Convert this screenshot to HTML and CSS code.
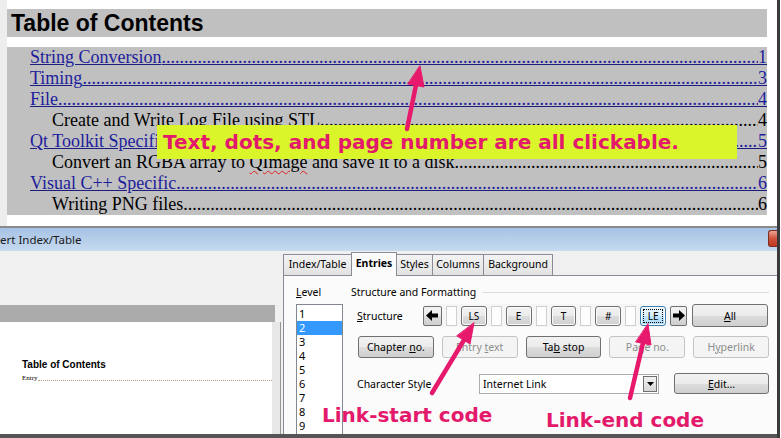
FILE: index.html
```html
<!DOCTYPE html>
<html lang="en">
<head>
    <meta charset="UTF-8">
    <title>Clickable Table of Contents</title>
    <link rel="stylesheet" href="styles.css">
</head>
<body>
    <div class="frame">
        <div class="shot">
            <!-- document with the generated index -->
            <div class="doc">
                <h1 class="toc-title">Table of Contents</h1>
                <div class="toc">
                    <a class="row lvl1 link" href="#">String Conversion<span class="dots"></span><span class="pg">1</span></a>
                    <a class="row lvl1 link" href="#">Timing<span class="dots"></span><span class="pg">3</span></a>
                    <a class="row lvl1 link" href="#">File<span class="dots"></span><span class="pg">4</span></a>
                    <div class="row lvl2">Create and Write Log File using STL<span class="dots"></span><span class="pg">4</span></div>
                    <a class="row lvl1 link" href="#">Qt Toolkit Specific<span class="dots"></span><span class="pg">5</span></a>
                    <div class="row lvl2">Convert an RGBA array to&nbsp;<span class="spell">QImage</span>&nbsp;and save it to a disk.<span class="dots"></span><span class="pg">5</span></div>
                    <a class="row lvl1 link" href="#">Visual C++ Specific<span class="dots"></span><span class="pg">6</span></a>
                    <div class="row lvl2">Writing PNG files<span class="dots"></span><span class="pg">6</span></div>
                </div>
            </div>

            <!-- Insert Index/Table dialog -->
            <div class="dialog">
                <div class="titlebar">
                    <span>ert Index/Table</span>
                    <span class="close"></span>
                </div>
                <div class="dlg-body">
                    <div class="preview">
                        <div class="pv-top"></div>
                        <div class="pv-band"></div>
                        <div class="pv-page">
                            <div class="pv-sheet">
                                <div class="pv-title">Table of Contents</div>
                                <div class="pv-entry"><span>Entry</span><span class="pv-lead"></span></div>
                            </div>
                            <div class="pv-scroll"></div>
                        </div>
                    </div>
                    <div class="tabs-area">
                        <div class="tabs">
                            <span class="tab t-index">Index/Table</span>
                            <span class="tab t-entries active">Entries</span>
                            <span class="tab t-styles">Styles</span>
                            <span class="tab t-columns">Columns</span>
                            <span class="tab t-bg">Background</span>
                        </div>
                        <div class="panel">
                            <div class="level-col">
                                <div class="lbl"><u>L</u>evel</div>
                                <ul class="levels">
                                    <li>1</li>
                                    <li class="sel">2</li>
                                    <li>3</li>
                                    <li>4</li>
                                    <li>5</li>
                                    <li>6</li>
                                    <li>7</li>
                                    <li>8</li>
                                    <li>9</li>
                                </ul>
                            </div>
                            <div class="struct-col">
                                <div class="group-head"><span>Structure and Formatting</span><span class="group-line"></span></div>
                                <div class="struct-row">
                                    <span class="lbl struct-lbl"><u>S</u>tructure</span>
                                    <div class="strip">
                                        <span class="btn arrow">
                                            <svg width="12" height="11" viewBox="0 0 12 11"><polygon points="0,5.5 6,0 6,3.5 12,3.5 12,7.5 6,7.5 6,11" fill="#000"/></svg>
                                        </span>
                                        <span class="field"></span>
                                        <span class="btn code">LS</span>
                                        <span class="field"></span>
                                        <span class="btn code">E</span>
                                        <span class="field"></span>
                                        <span class="btn code">T</span>
                                        <span class="field"></span>
                                        <span class="btn code">#</span>
                                        <span class="field"></span>
                                        <span class="btn code focus">LE</span>
                                        <span class="btn arrow">
                                            <svg width="12" height="11" viewBox="0 0 12 11"><polygon points="12,5.5 6,0 6,3.5 0,3.5 0,7.5 6,7.5 6,11" fill="#000"/></svg>
                                        </span>
                                    </div>
                                    <span class="btn all"><span><u>A</u>ll</span></span>
                                </div>
                                <div class="btn-row">
                                    <span class="btn push"><span>Chapter <u>n</u>o.</span></span>
                                    <span class="btn push off"><span>Entry <u>t</u>ext</span></span>
                                    <span class="btn push"><span>Ta<u>b</u> stop</span></span>
                                    <span class="btn push off"><span>Page no.</span></span>
                                    <span class="btn push off"><span>H<u>y</u>perlink</span></span>
                                </div>
                                <div class="style-row">
                                    <span class="lbl style-lbl">Character Style</span>
                                    <div class="combo">
                                        <span>Internet Link</span>
                                        <span class="drop">
                                            <svg width="7" height="4" viewBox="0 0 7 4"><polygon points="0,0 7,0 3.5,4" fill="#000"/></svg>
                                        </span>
                                    </div>
                                    <span class="btn edit"><span><u>E</u>dit...</span></span>
                                </div>
                            </div>
                        </div>
                    </div>
                </div>
            </div>
        </div>
        <div class="edge"></div>
    </div>

    <!-- annotations drawn over the screenshot -->
    <div class="callout">Text, dots, and page number are all clickable.</div>
    <div class="note note-start">Link-start code</div>
    <div class="note note-end">Link-end code</div>
    <svg class="arrows" width="781" height="438" viewBox="0 0 781 438">
        <g stroke="#e6196c" stroke-width="4.5" stroke-linecap="round" fill="#e6196c">
            <line x1="407" y1="129" x2="416" y2="85"/>
            <polygon points="420,66 424,87 408,84" stroke-width="1"/>
            <line x1="432" y1="393" x2="464" y2="340"/>
            <polygon points="474,323 470,344 457,336" stroke-width="1"/>
            <line x1="630" y1="398" x2="643" y2="343"/>
            <polygon points="648,324 651,345 636,342" stroke-width="1"/>
        </g>
    </svg>
</body>
</html>
```

FILE: styles.css
```css
*{
    margin: 0;
    padding: 0;
    box-sizing: border-box;
}
html, body{
    width: 781px;
    height: 438px;
    overflow: hidden;
}
body{
    background-color: #fff;
    position: relative;
    font-family: "Noto Sans", sans-serif;
    font-size: 10.5px;
    color: #000;
}
.frame{
    display: flex;
    height: 438px;
}
.shot{
    width: 777px;
    display: flex;
    flex-direction: column;
}
.edge{
    width: 3px;
    background-color: #3a3a3a;
}

/* document */
.doc{
    height: 226px;
    border-left: 7px solid #ededed;
    padding: 9px 10px 0 0;
}
.toc-title{
    height: 28px;
    background-color: #c0c0c0;
    font: bold 23px/28px "Liberation Sans", Arial, sans-serif;
    padding-left: 4px;
    margin-bottom: 10px;
}
.toc{
    background-color: #c0c0c0;
    font: 18px/21px "Liberation Serif", "Times New Roman", serif;
}
.row{
    display: flex;
    white-space: nowrap;
    color: #000;
    text-decoration: none;
}
.row.link{
    color: #1d1d9c;
    text-decoration: underline;
    text-decoration-color: #1d1d80;
}
.row.link span{
    text-decoration: underline;
    text-decoration-color: #1d1d80;
}
.lvl1{
    padding-left: 23px;
}
.lvl2{
    padding-left: 45px;
}
.dots{
    flex: 1;
    overflow: hidden;
}
.dots::after{
    content: "..............................................................................................................................................................................................................";
}
.pg{
    flex: none;
}
.spell{
    text-decoration: underline wavy #e02020;
    text-decoration-thickness: 1px;
    text-underline-offset: 2px;
}

/* dialog */
.dialog{
    flex: 1;
    display: flex;
    flex-direction: column;
    border-top: 2px solid #8a8a8a;
    border-bottom: 4px solid #555;
}
.titlebar{
    height: 23px;
    background: linear-gradient(#a6c2e4, #c6daf0);
    display: flex;
    justify-content: space-between;
    align-items: center;
    font-size: 11.5px;
    color: #1a1a1a;
}
.close{
    align-self: flex-start;
    margin-top: 2px;
    width: 9px;
    height: 17px;
    background: linear-gradient(#eda393, #d0543c 50%, #c0391f);
    border: 1px solid #7b2d22;
    border-right: none;
    border-radius: 3px 0 0 3px;
}
.dlg-body{
    flex: 1;
    display: flex;
    background-color: #f0f0f0;
}

/* preview */
.preview{
    width: 283px;
    display: flex;
    flex-direction: column;
}
.pv-top{
    height: 54px;
}
.pv-band{
    width: 275px;
    height: 17px;
    background-color: #ababab;
}
.pv-page{
    flex: 1;
    display: flex;
}
.pv-sheet{
    width: 272px;
    background-color: #fff;
    padding: 37px 0 0 22px;
}
.pv-title{
    font: bold 10px/12px "Liberation Sans", Arial, sans-serif;
}
.pv-entry{
    display: flex;
    align-items: flex-end;
    margin-top: 3px;
    font: 7px/8px "Liberation Serif", serif;
}
.pv-lead{
    flex: 1;
    border-bottom: 1px dotted #c49a70;
    margin-bottom: 1px;
}
.pv-scroll{
    width: 9px;
    background-color: #e7e7e7;
    border-right: 1px solid #969696;
}

/* tabs */
.tabs-area{
    flex: 1;
    display: flex;
    flex-direction: column;
}
.tabs{
    height: 24px;
    display: flex;
    align-items: flex-end;
}
.tab{
    height: 21px;
    border: 1px solid #898c95;
    border-bottom: none;
    margin-right: -1px;
    background: linear-gradient(#f3f3f3, #e2e2e2);
    line-height: 19px;
    text-align: center;
}
.t-index{ width: 69px; }
.t-entries{ width: 46px; }
.t-styles{ width: 37px; }
.t-columns{ width: 52px; }
.t-bg{ width: 70px; }
.tab.active{
    height: 24px;
    margin-bottom: -1px;
    position: relative;
    background: #fbfbfb;
    font-weight: bold;
    line-height: 21px;
}
.panel{
    flex: 1;
    display: flex;
    background-color: #fbfbfb;
    border-top: 1px solid #898c95;
    border-left: 1px solid #898c95;
    padding: 9px 0 0 12px;
}
.lbl{
    line-height: 14px;
    white-space: nowrap;
}
.level-col{
    width: 47px;
    display: flex;
    flex-direction: column;
}
.levels{
    flex: 1;
    margin-top: 5px;
    list-style: none;
    background-color: #fff;
    border: 1px solid #828790;
    border-bottom: none;
    padding-top: 2px;
    font-size: 11px;
}
.levels li{
    height: 14px;
    line-height: 14px;
    padding-left: 2px;
}
.levels li.sel{
    background-color: #3399ff;
    color: #fff;
}
.struct-col{
    width: 418px;
    margin-left: 8px;
}
.group-head{
    display: flex;
    align-items: center;
    line-height: 14px;
}
.group-line{
    flex: 1;
    margin-left: 6px;
    border-top: 1px solid #dcdcdc;
}
.struct-row{
    display: flex;
    align-items: center;
    height: 23px;
    margin-top: 5px;
}
.struct-lbl{
    width: 66px;
    margin-left: 6px;
}
.strip{
    width: 264px;
    height: 23px;
    display: flex;
    align-items: center;
    gap: 4px;
    background-color: #f6f6f6;
}
.btn{
    display: flex;
    align-items: center;
    justify-content: center;
    border: 1px solid #707070;
    border-radius: 3px;
    background: linear-gradient(#f2f2f2, #ebebeb 50%, #dddddd 51%, #cfcfcf);
    white-space: nowrap;
}
.arrow{
    width: 19px;
    height: 20px;
    border-radius: 2px;
}
.strip .arrow:last-child{
    width: 17px;
}
.field{
    width: 11px;
    height: 20px;
    border: 1px solid #cfcfcf;
    background-color: #fdfdfd;
}
.code{
    width: 26px;
    height: 20px;
    font-size: 10px;
    box-shadow: inset 0 0 0 1px #fafafa;
}
.code.focus{
    border-color: #3c7fb1;
    background: linear-gradient(#eaf6fd, #d9f0fc 50%, #bee6fd 51%, #a7d9f5);
    outline: 1px dotted #000;
    outline-offset: -4px;
}
.all{
    width: 76px;
    height: 23px;
    margin-left: 5px;
}
.btn-row{
    display: flex;
    gap: 8px;
    margin: 9px 0 0 7px;
}
.push{
    width: 76px;
    height: 22px;
}
.push.off{
    border-color: #c2c5c8;
    background: #f4f4f4;
    color: #8d8d8d;
}
.style-row{
    display: flex;
    align-items: center;
    margin: 15px 0 0 6px;
}
.style-lbl{
    width: 122px;
}
.combo{
    width: 180px;
    height: 20px;
    display: flex;
    justify-content: space-between;
    align-items: center;
    border: 1px solid #abadb3;
    background-color: #fff;
    padding: 0 1px 0 3px;
}
.drop{
    width: 14px;
    height: 16px;
    display: flex;
    align-items: center;
    justify-content: center;
    border: 1px solid #707070;
    background: linear-gradient(#f2f2f2, #d6d6d6);
}
.edit{
    width: 95px;
    height: 21px;
    margin-left: 15px;
}

/* annotations */
.callout{
    position: absolute;
    left: 157px;
    top: 125px;
    width: 580px;
    height: 34px;
    padding-left: 6px;
    background-color: #dbf52b;
    color: #e3196b;
    font: bold 20px/34px "DejaVu Sans", Verdana, sans-serif;
    white-space: nowrap;
}
.note{
    position: absolute;
    color: #e3196b;
    font: bold 20px/24px "DejaVu Sans", Verdana, sans-serif;
    white-space: nowrap;
}
.note-start{
    left: 322px;
    top: 403px;
}
.note-end{
    left: 546px;
    top: 408px;
}
.arrows{
    position: absolute;
    left: 0;
    top: 0;
    pointer-events: none;
}
```
